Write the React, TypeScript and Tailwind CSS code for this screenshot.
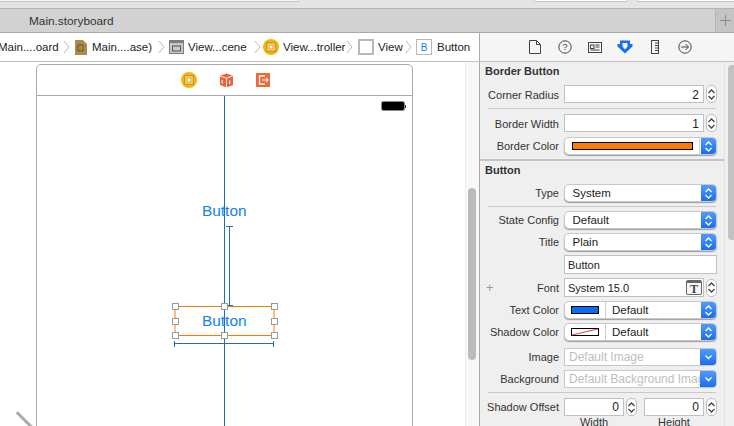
import { ReactNode } from "react";

const blue = "bg-gradient-to-b from-[#4f9bfb] to-[#1a6df0]";

function Updown({ color = "text-white" }: { color?: string }) {
  return (
    <svg width="9" height="13" viewBox="0 0 9 13" fill="none" stroke="currentColor" strokeWidth="1.3" className={color}>
      <path d="M1.5 5L4.5 2L7.5 5" />
      <path d="M1.5 8L4.5 11L7.5 8" />
    </svg>
  );
}

function Stepper() {
  return (
    <div className="flex h-[18px] w-[11px] shrink-0 items-center justify-center rounded-[5px] border border-[#bcbcbc] bg-white">
      <Updown color="text-[#444]" />
    </div>
  );
}

function Row({ label, className = "", labelClass = "", plus, children }: { label: string; className?: string; labelClass?: string; plus?: boolean; children: ReactNode }) {
  return (
    <div className={`relative flex items-center ${className}`}>
      {plus && <span className="absolute left-[6px] text-[13px] leading-none text-[#999]">+</span>}
      <div className={`w-[79px] shrink-0 whitespace-nowrap text-right text-[#333] ${labelClass}`}>{label}</div>
      <div className="ml-[5px] flex items-center">{children}</div>
    </div>
  );
}

function NumberField({ value, w = "w-[140px]", align = "items-center" }: { value: string; w?: string; align?: string }) {
  return (
    <>
      <div className={`flex h-[18px] ${w} ${align} justify-end border border-[#c0c0c0] bg-white pr-1 text-[12px] leading-[18px] text-[#222]`}>{value}</div>
      <div className="ml-[2px]">
        <Stepper />
      </div>
    </>
  );
}

function Popup({ children, disabled }: { children: ReactNode; disabled?: boolean }) {
  return (
    <div className={`flex h-[18px] w-[153px] items-stretch overflow-hidden ${disabled ? "rounded-r-[4px]" : "rounded-[5px] shadow-[0_1px_1px_rgba(0,0,0,0.35)]"} border-[#c8c8c8] bg-white ${disabled ? "border" : "border-[0.5px]"}`}>
      <div className="flex min-w-0 flex-1 items-center overflow-hidden whitespace-nowrap text-[11.5px]">{children}</div>
      {disabled ? (
        <div className={`flex w-[16px] shrink-0 items-center justify-center ${blue}`}>
          <svg width="9" height="6" viewBox="0 0 9 6" fill="none" stroke="white" strokeWidth="1.4">
            <path d="M1.5 1.5L4.5 4.5L7.5 1.5" />
          </svg>
        </div>
      ) : (
        <div className={`flex w-[15px] shrink-0 items-center justify-center ${blue}`}>
          <Updown />
        </div>
      )}
    </div>
  );
}

function Swatch({ children }: { children: ReactNode }) {
  return (
    <>
      <div className="flex h-full w-[41px] shrink-0 items-center justify-center border-r border-[#cfcfcf]">{children}</div>
      <span className="ml-[6px] text-[#222]">Default</span>
    </>
  );
}

function Sep({ className = "" }: { className?: string }) {
  return <div className={`ml-[8px] h-px w-[228px] bg-[#c8c8c8] ${className}`} />;
}

function Chevron() {
  return (
    <svg width="7" height="14" viewBox="0 0 7 14" fill="none" stroke="#b9b9b9" strokeWidth="1" className="shrink-0">
      <path d="M1 1L6 7L1 13" />
    </svg>
  );
}

function VcIcon({ size = 16 }: { size?: number }) {
  return (
    <svg width={size} height={size} viewBox="0 0 16 16" className="shrink-0">
      <circle cx="8" cy="8" r="8" fill="#f5b30f" />
      <rect x="3.8" y="3.8" width="8.4" height="8.4" fill="#fbe08a" stroke="#b98a10" strokeWidth="1" />
      <rect x="6" y="6" width="4" height="4" fill="#fff7dd" stroke="#c89a1c" strokeWidth="0.8" />
    </svg>
  );
}

function Crumb({ icon, text, className = "" }: { icon?: ReactNode; text: string; className?: string }) {
  return (
    <div className={`flex shrink-0 items-center ${className}`}>
      {icon}
      <span className="whitespace-nowrap pt-[2px]">{text}</span>
    </div>
  );
}

function Handle({ x, y }: { x: number; y: number }) {
  return (
    <div
      className="absolute h-[7px] w-[7px] border-[1.5px] border-[#9a9a9a] bg-white"
      style={{ left: x - 3, top: y - 3 }}
    />
  );
}

function Canvas() {
  return (
    <div className="relative h-full w-[479px] overflow-hidden bg-white">
      <div className="absolute right-0 top-0 h-full w-[14px] border-l border-[#eeeeee] bg-[#f8f8f8]">
        <div className="absolute left-[2px] top-[126px] h-[172px] w-[8px] rounded-full bg-[#bcbcbc]" />
      </div>

      {/* scene frame */}
      <div className="absolute left-[36px] top-[2px] h-[500px] w-[377px] rounded-t-[5px] border border-[#a9a9a9] bg-white">
        <div className="flex h-[31px] items-center border-b border-[#a9a9a9] pl-[144px]">
          <VcIcon />
          <svg width="15" height="15" viewBox="0 0 15 15" className="ml-[22px] shrink-0">
            <path d="M7.5 0.5L14 2.8V12L7.5 14.5L1 12V2.8Z" fill="#ef6240" />
            <path d="M1 2.8L7.5 5.2L14 2.8M7.5 5.2V14.5" stroke="#fff" strokeWidth="0.9" fill="none" />
            <path d="M3.2 7v3.6M10.6 7.4v3.6" stroke="#fff" strokeWidth="1.1" />
          </svg>
          <svg width="14" height="14" viewBox="0 0 14 14" className="ml-[22px] shrink-0">
            <rect width="14" height="14" fill="#f3683a" />
            <path d="M9 3H3.5V11H9" stroke="#fff" strokeWidth="1.3" fill="none" />
            <path d="M6 7H12M10 5L12 7L10 9" stroke="#fff" strokeWidth="1.2" fill="none" />
          </svg>
        </div>
        <div className="absolute left-[345px] top-[37px] flex items-center">
          <div className="h-[8px] w-[22px] rounded-[1px] bg-black outline outline-1 outline-[#888]" />
          <div className="ml-[1px] h-[3px] w-[1px] bg-[#333]" />
        </div>
      </div>

      {/* center guide */}
      <div className="absolute left-[224px] top-[34px] h-[371px] w-px bg-[#1f6db5]" />

      <div className="absolute left-[202px] top-[139px] text-[15.4px] leading-[20px] text-[#147efb]">Button</div>

      {/* vertical constraint */}
      <div className="absolute left-[226px] top-[164px] h-px w-[7px] bg-[#1f6db5]" />
      <div className="absolute left-[229px] top-[164px] h-[80px] w-px bg-[#1f6db5]" />
      <div className="absolute left-[226px] top-[243px] h-px w-[7px] bg-[#1f6db5]" />

      {/* selected button */}
      <div className="absolute left-[175px] top-[244px] h-[30px] w-[99px] border-y border-[#f57c00]" />
      <div className="absolute left-[174px] top-[245px] h-[28px] w-[2px] bg-[#fdbd85]" />
      <div className="absolute left-[273px] top-[245px] h-[28px] w-[2px] bg-[#fdbd85]" />
      <div className="absolute left-[202px] top-[249px] text-[15.4px] leading-[20px] text-[#147efb]">Button</div>
      <Handle x={175} y={244} />
      <Handle x={224} y={244} />
      <Handle x={274} y={244} />
      <Handle x={175} y={259} />
      <Handle x={274} y={259} />
      <Handle x={175} y={273} />
      <Handle x={224} y={273} />
      <Handle x={274} y={273} />

      {/* width constraint */}
      <div className="absolute left-[174px] top-[279px] h-[6px] w-px bg-[#1f6db5]" />
      <div className="absolute left-[174px] top-[281px] h-px w-[100px] bg-[#1f6db5]" />
      <div className="absolute left-[273px] top-[279px] h-[6px] w-px bg-[#1f6db5]" />

      {/* resize corner */}
      <div className="absolute left-[13px] top-[358px] h-[3px] w-[26px] rotate-45 bg-[#aaaaaa]" />
    </div>
  );
}

function Inspector() {
  return (
    <div className="relative h-full w-[254px] overflow-hidden bg-[#efefef] text-[11px] leading-[18px]">
      <div className="absolute right-0 top-[3px] h-[175px] w-[6px] rounded-l-[4px] bg-[#c2c2c2]" />
      <div className="absolute bottom-0 right-[9px] top-0 w-px bg-[#e4e4e4]" />

      <div className="w-[244px] pt-[1px]">
        <div className="pl-[5px] font-bold leading-[16px] text-[#333]">Border Button</div>
        <Row label="Corner Radius" labelClass="h-[18px] leading-[20px]" className="mt-[6px]">
          <NumberField value="2" align="items-start" />
        </Row>
        <Sep className="mt-[5px]" />
        <Row label="Border Width" labelClass="h-[18px] leading-[20px]" className="mt-[5px]">
          <NumberField value="1" align="items-start" />
        </Row>
        <Row label="Border Color" className="mt-[5px]">
          <Popup>
            <div className="ml-[7px] h-[8px] w-[121px] shrink-0 border border-black bg-[#ff7a00]" />
            <div className="ml-[6px] h-full w-px bg-[#d8d8d8]" />
          </Popup>
        </Row>
      </div>
      <div className="mt-[4px] h-[2px] w-[244px] bg-[#c4c4c4]" />
      <div className="w-[244px]">
        <div className="mt-[1px] pl-[5px] font-bold leading-[16px] text-[#333]">Button</div>
        <Row label="Type" className="mt-[6px]">
          <Popup>
            <span className="ml-[7.5px] text-[#222]">System</span>
          </Popup>
        </Row>
        <Sep className="mt-[4px]" />
        <Row label="State Config" className="mt-[4px]">
          <Popup>
            <span className="ml-[7.5px] text-[#222]">Default</span>
          </Popup>
        </Row>
        <Row label="Title" className="mt-[4px]">
          <Popup>
            <span className="ml-[7.5px] text-[#222]">Plain</span>
          </Popup>
        </Row>
        <div className="ml-[84px] mt-[4px] flex h-[19px] w-[153px] items-center border border-[#c0c0c0] bg-white pl-[3px] text-[#222]">Button</div>
        <Row label="Font" plus className="mt-[4px]">
          <div className="flex h-[19px] w-[140px] items-center justify-between border border-[#c0c0c0] bg-white pl-[3px] pr-[1px] text-[#222]">
            <span>System 15.0</span>
            <span className="flex h-[15px] w-[16px] items-center justify-center rounded-[2px] border border-t-[3px] border-[#666] bg-[#f6f6f6] font-['Liberation_Serif',serif] text-[12px] font-bold leading-none text-[#444]">T</span>
          </div>
          <div className="ml-[2px]">
            <Stepper />
          </div>
        </Row>
        <Row label="Text Color" className="mt-[4px]">
          <Popup>
            <Swatch>
              <div className="h-[8px] w-[28px] border border-black bg-[#0a6cf5]" />
            </Swatch>
          </Popup>
        </Row>
        <Row label="Shadow Color" className="mt-[4px]">
          <Popup>
            <Swatch>
              <svg width="28" height="8" viewBox="0 0 28 8" className="block">
                <rect x="0.5" y="0.5" width="27" height="7" fill="white" stroke="black" />
                <path d="M1 7L27 1" stroke="#ee3b2c" strokeWidth="1" />
              </svg>
            </Swatch>
          </Popup>
        </Row>
        <Row label="Image" className="mt-[7px]">
          <Popup disabled>
            <span className="ml-1 text-[12px] text-[#bdbdbd]">Default Image</span>
          </Popup>
        </Row>
        <Row label="Background" className="mt-[4px]">
          <Popup disabled>
            <span className="ml-1 text-[12px] text-[#bdbdbd]">Default Background Image</span>
          </Popup>
        </Row>
        <Sep className="mt-[4px]" />
        <Row label="Shadow Offset" className="mt-[5px]">
          <NumberField value="0" w="w-[60px]" />
          <div className="ml-[7px] flex items-center">
            <NumberField value="0" w="w-[60px]" />
          </div>
        </Row>
        <div className="-mt-[3px] flex">
          <div className="ml-[84px] w-[60px] text-center text-[#333]">Width</div>
          <div className="ml-[20px] w-[60px] text-center text-[#333]">Height</div>
        </div>
      </div>
    </div>
  );
}

export default function App() {
  return (
    <div className="flex h-[426px] w-[734px] flex-col overflow-hidden bg-white font-['Liberation_Sans',Arial,sans-serif] text-[11.5px] text-[#222]">
      {/* window toolbar remains */}
      <div className="relative h-[9px] shrink-0 border-b border-[#b4b4b4] bg-[#e4e4e4]">
        <div className="absolute left-0 top-0 h-[2px] w-[299px] rounded-br-[3px] border-b border-r border-[#c4c4c4] bg-[#f8f8f8]" />
        <div className="absolute left-[534px] top-0 h-[2px] w-[93px] rounded-b-[3px] border border-t-0 border-[#c4c4c4] bg-white" />
        <div className="absolute left-[637px] top-0 h-[2px] w-[97px] rounded-bl-[3px] border-b border-l border-[#c4c4c4] bg-white" />
      </div>

      {/* tab bar */}
      <div className="flex h-[24px] shrink-0 items-center justify-between border-b border-[#a9a9a9] bg-[#d2d2d2]">
        <span className="ml-[29px] pt-[2px] text-[11.8px] text-[#333]">Main.storyboard</span>
        <div className="flex h-full w-[19px] items-center justify-center border-l border-[#b4b4b4] bg-[#c4c4c4]">
          <svg width="11" height="11" viewBox="0 0 11 11" stroke="#8a8a8a" strokeWidth="1">
            <path d="M5.5 0V11M0 5.5H11" />
          </svg>
        </div>
      </div>

      {/* breadcrumb + inspector tabs */}
      <div className="flex h-[29px] shrink-0 border-b border-[#c0c0c0]">
        <div className="flex w-[479px] items-center overflow-hidden bg-white">
          <div className="ml-[-2px] w-[65px] shrink-0 whitespace-nowrap pt-[2px]">Main....oard</div>
          <Chevron />
          <Crumb
            className="ml-[5px] w-[83px]"
            text="Main....ase)"
            icon={
              <svg width="12" height="15" viewBox="0 0 12 15" className="mr-[5px] shrink-0">
                <path d="M0 0H8L12 4V15H0Z" fill="#a98a4d" />
                <path d="M3 5H8V11H3Z" fill="none" stroke="#6f5520" strokeWidth="1" />
              </svg>
            }
          />
          <Chevron />
          <Crumb
            className="ml-[4px] w-[85px]"
            text="View...cene"
            icon={
              <svg width="15" height="14" viewBox="0 0 15 14" className="mr-[4px] shrink-0">
                <rect width="15" height="14" fill="#7d7d7d" />
                <rect x="1" y="3" width="13" height="10" fill="#c9c9c9" />
                <rect x="3.5" y="6" width="8" height="5" fill="none" stroke="#555" />
              </svg>
            }
          />
          <Chevron />
          <Crumb className="ml-[2px] w-[83px]" text="View...troller" icon={<div className="mr-[4px]"><VcIcon /></div>} />
          <Chevron />
          <Crumb
            className="ml-[5px] w-[47px]"
            text="View"
            icon={<div className="mr-[4px] h-[16px] w-[16px] shrink-0 border-2 border-[#b8b8b8] bg-white" />}
          />
          <Chevron />
          <Crumb
            className="ml-[4px]"
            text="Button"
            icon={
              <div className="mr-[5px] flex h-[16px] w-[16px] shrink-0 items-center justify-center border border-[#b8b8b8] bg-white text-[10px] text-[#147efb]">B</div>
            }
          />
        </div>
        <div className="flex flex-1 items-center border-l border-[#a9a9a9] bg-[#f5f5f5] pl-[49px]">
          <svg width="12" height="14" viewBox="0 0 12 14" fill="none" stroke="#444" strokeWidth="1">
            <path d="M0.5 0.5H7.5L11.5 4.5V13.5H0.5Z" />
            <path d="M7.5 0.5V4.5H11.5" />
          </svg>
          <svg width="14" height="14" viewBox="0 0 14 14" fill="none" stroke="#444" className="ml-[17px]">
            <circle cx="7" cy="7" r="6.2" />
            <text x="7" y="10.4" textAnchor="middle" fontSize="9.5" fill="#444" stroke="none">?</text>
          </svg>
          <svg width="14" height="11" viewBox="0 0 14 11" fill="none" stroke="#444" className="ml-[16px]">
            <rect x="0.5" y="0.5" width="13" height="10" />
            <rect x="2.5" y="3" width="3.5" height="3.5" />
            <path d="M7.5 3H11.5M7.5 5H11.5M2.5 8H11.5" />
          </svg>
          <svg width="16" height="14" viewBox="0 0 16 14" className="ml-[15px]">
            <path d="M3 0.5H13V4H15.5V6.5L8 13.5L0.5 6.5V4H3Z" fill="#1670f5" />
            <path d="M5.5 3V6.5L8 9.5L10.5 6.5V3Z" fill="#f5f5f5" />
          </svg>
          <svg width="8" height="14" viewBox="0 0 8 14" fill="none" stroke="#444" className="ml-[18px]">
            <rect x="0.5" y="0.5" width="7" height="13" />
            <path d="M4 3H7.5M4 5.5H7.5M4 8H7.5M4 10.5H7.5" />
          </svg>
          <svg width="14" height="14" viewBox="0 0 14 14" fill="none" stroke="#444" className="ml-[19px]">
            <circle cx="7" cy="7" r="6.2" />
            <path d="M3 7H10.5M7.5 4L10.5 7L7.5 10" />
          </svg>
        </div>
      </div>

      {/* main */}
      <div className="flex min-h-0 flex-1">
        <Canvas />
        <div className="w-px bg-[#a9a9a9]" />
        <Inspector />
      </div>
    </div>
  );
}
